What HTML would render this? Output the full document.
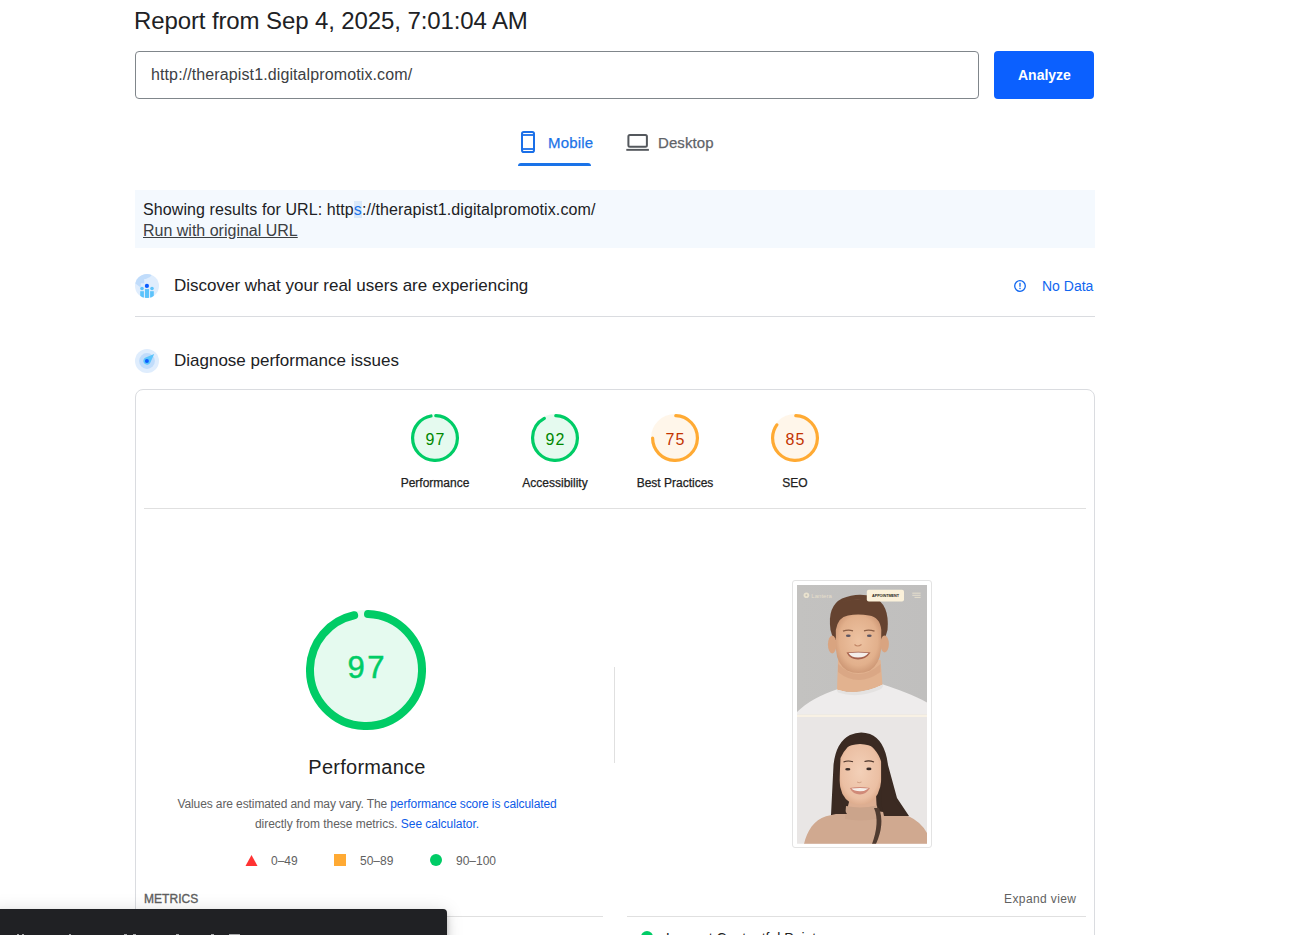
<!DOCTYPE html>
<html><head><meta charset="utf-8">
<style>
html,body{margin:0;padding:0;background:#fff;width:1306px;height:935px;overflow:hidden;position:relative;}
body{font-family:"Liberation Sans",sans-serif;color:#202124;}
.a{position:absolute;white-space:nowrap;}
.t{position:absolute;white-space:nowrap;line-height:1;}
</style></head><body>

<!-- Title -->
<div class="t" style="left:134px;top:9px;font-size:24px;letter-spacing:-0.11px;color:#202124;">Report from Sep 4, 2025, 7:01:04 AM</div>

<!-- URL input -->
<div class="a" style="left:135px;top:51px;width:842px;height:46px;border:1px solid #80868b;border-radius:4px;"></div>
<div class="t" style="left:151px;top:67px;font-size:16px;letter-spacing:0.11px;color:#3c4043;">http://therapist1.digitalpromotix.com/</div>

<!-- Analyze button -->
<div class="a" style="left:994px;top:51px;width:100px;height:48px;background:#0b60ff;border-radius:4px;"></div>
<div class="t" style="left:1018px;top:68px;font-size:14px;font-weight:bold;color:#fff;">Analyze</div>

<!-- Tabs -->
<svg class="a" style="left:518px;top:128px;" width="22" height="28" viewBox="0 0 22 28">
  <rect x="4" y="4" width="12" height="20" rx="1.8" ry="1.8" fill="none" stroke="#1a6fe8" stroke-width="2"/>
  <line x1="4" y1="7" x2="16" y2="7" stroke="#1a6fe8" stroke-width="1.8"/>
  <line x1="4" y1="21" x2="16" y2="21" stroke="#1a6fe8" stroke-width="1.8"/>
</svg>
<div class="t" style="left:548px;top:135px;font-size:15px;letter-spacing:0.2px;color:#1a73e8;-webkit-text-stroke:0.25px #1a73e8;">Mobile</div>
<div class="a" style="left:518px;top:163px;width:73px;height:3px;background:#1a73e8;border-radius:3px 3px 0 0;"></div>

<svg class="a" style="left:624px;top:130px;" width="28" height="24" viewBox="0 0 28 24">
  <rect x="4.4" y="5" width="18.5" height="11.7" rx="1.5" fill="none" stroke="#54585d" stroke-width="2"/>
  <rect x="2.3" y="18.9" width="22.6" height="1.9" fill="#54585d"/>
</svg>
<div class="t" style="left:658px;top:135px;font-size:15px;letter-spacing:0.1px;color:#5f6368;-webkit-text-stroke:0.25px #5f6368;">Desktop</div>

<!-- Info box -->
<div class="a" style="left:135px;top:190px;width:960px;height:58px;background:#f4f9fe;"></div>
<div class="t" style="left:143px;top:202px;font-size:16px;letter-spacing:0.094px;color:#202124;">Showing results for URL: http<span style="color:#1a73e8;background:#dbe9f9;">s</span>://therapist1.digitalpromotix.com/</div>
<div class="t" style="left:143px;top:223px;font-size:16px;color:#3c4043;text-decoration:underline;">Run with original URL</div>

<!-- Discover row -->
<svg class="a" style="left:135px;top:274px;" width="24" height="24" viewBox="0 0 24 24">
  <defs><clipPath id="dc"><circle cx="12" cy="12" r="12"/></clipPath></defs>
  <g clip-path="url(#dc)">
  <rect width="24" height="24" fill="#dfedfd"/>
  <path d="M-1 8.6 L4.7 12.7 L5.8 12.7 L5.8 9.2 L9.2 9.2 L9.2 5 L10.8 5 L15 3.1 L16.8 0.8 L17 -1 L-1 -1 Z" fill="#c0dcfb"/>
  <circle cx="11.9" cy="11.9" r="2.1" fill="#0b5cff"/>
  <rect x="10" y="15.1" width="4" height="10" fill="#5cc3fb"/>
  <circle cx="7" cy="14.5" r="1.8" fill="#5cc3fb"/>
  <rect x="5.2" y="17.2" width="3.7" height="8" fill="#5cc3fb"/>
  <circle cx="17" cy="14.5" r="1.8" fill="#5cc3fb"/>
  <rect x="15.1" y="17.2" width="3.7" height="8" fill="#5cc3fb"/>
  </g>
</svg>
<div class="t" style="left:174px;top:277px;font-size:17px;color:#202124;">Discover what your real users are experiencing</div>
<svg class="a" style="left:1013px;top:279px;" width="14" height="14" viewBox="0 0 14 14">
  <circle cx="7" cy="7" r="5.3" fill="none" stroke="#0f66f0" stroke-width="1.3"/>
  <rect x="6.35" y="3.8" width="1.3" height="4" fill="#0f66f0"/>
  <rect x="6.35" y="8.8" width="1.3" height="1.3" fill="#0f66f0"/>
</svg>
<div class="t" style="left:1042px;top:279px;font-size:14px;color:#0f66f0;">No Data</div>
<div class="a" style="left:135px;top:316px;width:960px;height:1px;background:#dadce0;"></div>

<!-- Diagnose row -->
<svg class="a" style="left:135px;top:349px;" width="24" height="24" viewBox="0 0 24 24">
  <circle cx="12" cy="12" r="12" fill="#dfedfd"/>
  <circle cx="12" cy="12" r="7.9" fill="#c0dcfb"/>
  <path d="M10.62 8.57 L19.2 5 L15.39 13.48 A3.7 3.7 0 1 1 10.62 8.57 Z" fill="#5cc5fb"/>
  <circle cx="11.9" cy="11.9" r="2" fill="#0b5cff"/>
</svg>
<div class="t" style="left:174px;top:352px;font-size:17px;color:#202124;">Diagnose performance issues</div>

<!-- Card -->
<div class="a" style="left:135px;top:389px;width:958px;height:600px;border:1px solid #dadce0;border-radius:8px;"></div>

<svg class="a" style="left:411px;top:414px;" width="48" height="48" viewBox="0 0 120 120">
  <circle cx="60" cy="60" r="60" fill="#0c6" fill-opacity="0.1"/>
  <circle cx="60" cy="60" r="56" fill="none" stroke="#0c6" stroke-width="8" stroke-linecap="round" stroke-dasharray="337.30 351.86" transform="rotate(-87.954 60 60)"/>
</svg>
<div class="t" style="left:395px;width:80px;text-align:center;top:432px;font-size:16px;letter-spacing:1px;text-indent:1px;color:#080;">97</div>
<div class="t" style="left:375px;width:120px;text-align:center;top:477px;font-size:12px;color:#212121;-webkit-text-stroke:0.25px #212121;">Performance</div>
<svg class="a" style="left:531px;top:414px;" width="48" height="48" viewBox="0 0 120 120">
  <circle cx="60" cy="60" r="60" fill="#0c6" fill-opacity="0.1"/>
  <circle cx="60" cy="60" r="56" fill="none" stroke="#0c6" stroke-width="8" stroke-linecap="round" stroke-dasharray="319.71 351.86" transform="rotate(-87.954 60 60)"/>
</svg>
<div class="t" style="left:515px;width:80px;text-align:center;top:432px;font-size:16px;letter-spacing:1px;text-indent:1px;color:#080;">92</div>
<div class="t" style="left:495px;width:120px;text-align:center;top:477px;font-size:12px;color:#212121;-webkit-text-stroke:0.25px #212121;">Accessibility</div>
<svg class="a" style="left:651px;top:414px;" width="48" height="48" viewBox="0 0 120 120">
  <circle cx="60" cy="60" r="60" fill="#fa3" fill-opacity="0.1"/>
  <circle cx="60" cy="60" r="56" fill="none" stroke="#fa3" stroke-width="8" stroke-linecap="round" stroke-dasharray="259.89 351.86" transform="rotate(-87.954 60 60)"/>
</svg>
<div class="t" style="left:635px;width:80px;text-align:center;top:432px;font-size:16px;letter-spacing:1px;text-indent:1px;color:#c33300;">75</div>
<div class="t" style="left:615px;width:120px;text-align:center;top:477px;font-size:12px;color:#212121;-webkit-text-stroke:0.25px #212121;">Best Practices</div>
<svg class="a" style="left:771px;top:414px;" width="48" height="48" viewBox="0 0 120 120">
  <circle cx="60" cy="60" r="60" fill="#fa3" fill-opacity="0.1"/>
  <circle cx="60" cy="60" r="56" fill="none" stroke="#fa3" stroke-width="8" stroke-linecap="round" stroke-dasharray="295.08 351.86" transform="rotate(-87.954 60 60)"/>
</svg>
<div class="t" style="left:755px;width:80px;text-align:center;top:432px;font-size:16px;letter-spacing:1px;text-indent:1px;color:#c33300;">85</div>
<div class="t" style="left:735px;width:120px;text-align:center;top:477px;font-size:12px;color:#212121;-webkit-text-stroke:0.25px #212121;">SEO</div>
<div class="a" style="left:144px;top:508px;width:942px;height:1px;background:#e0e0e0;"></div>
<svg class="a" style="left:306px;top:610px;" width="120" height="120" viewBox="0 0 120 120">
  <circle cx="60" cy="60" r="60" fill="#0c6" fill-opacity="0.1"/>
  <circle cx="60" cy="60" r="56" fill="none" stroke="#0c6" stroke-width="8" stroke-linecap="round" stroke-dasharray="337.30 351.86" transform="rotate(-87.954 60 60)"/>
</svg>
<div class="t" style="left:266px;width:200px;text-align:center;top:652px;font-size:31px;letter-spacing:2.5px;text-indent:2.5px;color:#0c6;-webkit-text-stroke:0.5px #0c6;">97</div>
<div class="t" style="left:217px;width:300px;text-align:center;top:757px;font-size:20px;letter-spacing:0.27px;color:#212121;">Performance</div>
<div class="a" style="left:167px;width:400px;text-align:center;top:794px;font-size:12px;line-height:20px;letter-spacing:-0.1px;color:#616161;">Values are estimated and may vary. The <span style="color:#0d5be8;">performance score is calculated</span></div>
<div class="a" style="left:167px;width:400px;text-align:center;top:814px;font-size:12px;line-height:20px;letter-spacing:-0.03px;color:#616161;">directly from these metrics. <span style="color:#0d5be8;">See calculator.</span></div>
<svg class="a" style="left:245px;top:854px;" width="13" height="13" viewBox="0 0 13 13"><path d="M6.5 1 L12.5 12 L0.5 12 Z" fill="#f33"/></svg>
<div class="t" style="left:271px;top:855px;font-size:12px;color:#616161;">0–49</div>
<div class="a" style="left:334px;top:854px;width:12px;height:12px;background:#fa3;"></div>
<div class="t" style="left:360px;top:855px;font-size:12px;color:#616161;">50–89</div>
<div class="a" style="left:430px;top:854px;width:12px;height:12px;background:#0c6;border-radius:50%;"></div>
<div class="t" style="left:456px;top:855px;font-size:12px;color:#616161;">90–100</div>
<div class="a" style="left:614px;top:667px;width:1px;height:96px;background:#e0e0e0;"></div>
<div class="t" style="left:144px;top:893px;font-size:12px;letter-spacing:0.05px;color:#5f5f5f;-webkit-text-stroke:0.35px #5f5f5f;">METRICS</div>
<div class="t" style="left:1004px;top:893px;font-size:12px;letter-spacing:0.4px;color:#616161;">Expand view</div>
<div class="a" style="left:144px;top:916px;width:459px;height:1px;background:#e0e0e0;"></div>
<div class="a" style="left:627px;top:916px;width:459px;height:1px;background:#e0e0e0;"></div>
<div class="a" style="left:641px;top:931px;width:12px;height:12px;background:#0c6;border-radius:50%;"></div>
<div class="t" style="left:666px;top:931px;font-size:14px;color:#212121;">Largest Contentful Paint</div>
<div class="a" style="left:-10px;top:909px;width:457px;height:60px;background:#202124;border-radius:4px;box-shadow:0 3px 5px -1px rgba(0,0,0,.2),0 6px 10px 0 rgba(0,0,0,.14),0 1px 18px 0 rgba(0,0,0,.12);"></div>
<div class="a" style="left:17.4px;top:933.5px;width:1.6px;height:1.5px;background:#a9aaac;"></div><div class="a" style="left:22px;top:933.5px;width:2.0px;height:1.5px;background:#a9aaac;"></div><div class="a" style="left:69px;top:933.5px;width:2.0px;height:1.5px;background:#a9aaac;"></div><div class="a" style="left:124.4px;top:933.5px;width:2.6px;height:1.5px;background:#a9aaac;"></div><div class="a" style="left:133px;top:933.5px;width:2.5px;height:1.5px;background:#a9aaac;"></div><div class="a" style="left:176px;top:933.5px;width:2.8px;height:1.5px;background:#a9aaac;"></div><div class="a" style="left:211px;top:933.5px;width:2.6px;height:1.5px;background:#a9aaac;"></div><div class="a" style="left:229px;top:933.5px;width:10.5px;height:1.5px;background:#a9aaac;"></div>
<div class="a" style="left:792px;top:580px;width:138px;height:266px;border:1px solid #e3e3e3;border-radius:3px;background:#fff;"></div>
<svg class="a" style="left:797px;top:585px;" width="130" height="259" viewBox="797 585 130 259">
<defs>
  <clipPath id="c1"><rect x="797" y="585" width="130" height="129.6"/></clipPath>
  <clipPath id="c2"><rect x="797" y="717" width="130" height="126.7"/></clipPath>
  <radialGradient id="skin1" cx="0.5" cy="0.45" r="0.6"><stop offset="0" stop-color="#eec3a2"/><stop offset="0.7" stop-color="#e2b08c"/><stop offset="1" stop-color="#c99270"/></radialGradient>
  <radialGradient id="skin2" cx="0.5" cy="0.45" r="0.6"><stop offset="0" stop-color="#f3d0b8"/><stop offset="0.75" stop-color="#ebbfa3"/><stop offset="1" stop-color="#d9a686"/></radialGradient>
  <linearGradient id="bg1" x1="0" y1="0" x2="1" y2="0"><stop offset="0" stop-color="#c3c2c0"/><stop offset="1" stop-color="#c0bfbe"/></linearGradient>
</defs>
<g clip-path="url(#c1)">
  <rect x="797" y="585" width="130" height="130" fill="url(#bg1)"/>
  <!-- neck -->
  <path d="M838 660 L880.5 660 L882.5 685 Q858 696 837 690 Z" fill="#e2b28f"/>
  <path d="M838 664 Q858 684 880.5 664 L880.5 672 Q858 688 838 672 Z" fill="#c58d6a" opacity="0.28"/>
  <!-- shirt -->
  <path d="M797 712 C806 703 822 694 836.5 689.5 Q858 697 883 684.5 C897 689 914 695 927 702.5 L927 716 L797 716 Z" fill="#eeecec"/>
  <path d="M836.5 689.5 Q858 697 883 684.5 Q883.5 687.5 880 689.5 Q858 699 838 692.5 Z" fill="#e4e2e1"/>
  <!-- hair back -->
  <path d="M830.5 630 Q827 606 842 598.5 Q857 592 873 596.5 Q890 604 887.5 630 L884.5 640 L833.5 640 Z" fill="#654330"/>
  <!-- ears -->
  <ellipse cx="832.2" cy="644.5" rx="4.3" ry="9" fill="#d9a480"/>
  <ellipse cx="884.6" cy="644" rx="4.3" ry="8.5" fill="#d9a480"/>
  <!-- face -->
  <path d="M835.8 630 Q838 617 848 615.5 Q858 613.5 869 615.5 Q880 617 881.3 630 L881 650 Q879.5 664 870 670.5 Q858 675.5 847 670.5 Q837 664 836 650 Z" fill="url(#skin1)"/>
  <path d="M840 603 Q857 596 876 603 Q866 599.5 857 599.5 Q848 599.5 840 603 Z" fill="#7b5640"/>
  <!-- brows -->
  <path d="M843 631.2 Q848 629.2 853 630.8" stroke="#8a5e45" stroke-width="1.3" fill="none"/>
  <path d="M864 630.8 Q869 629.2 874.5 631.2" stroke="#8a5e45" stroke-width="1.3" fill="none"/>
  <!-- eyes -->
  <ellipse cx="848.3" cy="635.8" rx="2.4" ry="1.2" fill="#5d5662"/>
  <ellipse cx="869.3" cy="635.8" rx="2.4" ry="1.2" fill="#5d5662"/>
  <!-- nose shadow -->
  <path d="M854.5 644.5 Q857.5 647.5 861.5 644.5" stroke="#c18766" stroke-width="1.1" fill="none"/>
  <!-- smile -->
  <path d="M846.5 652.5 Q858 651 870.5 652.5 Q866 659.5 858 659.5 Q850 659.5 846.5 652.5 Z" fill="#a5604c"/>
  <path d="M848.5 653 Q858 652 868.5 653 Q865 657.5 858 657.5 Q851 657.5 848.5 653 Z" fill="#f4eeea"/>
</g>
<rect x="797" y="714.6" width="130" height="2.4" fill="#f8f1e4"/>
<g clip-path="url(#c2)">
  <rect x="797" y="717" width="130" height="127" fill="#e9e6e5"/>
  <!-- back hair -->
  <path d="M831 815 L833.5 765 Q836 742 850 735 Q860 730.5 870 734 Q885 740 888 765 L897 798 L909 816 L880 818 L848 818 Z" fill="#3a2a22"/>
  <!-- neck -->
  <path d="M851 795 L876 795 L877 813 L846 813 Z" fill="#dcae92"/>
  <!-- sweater -->
  <path d="M804 844 C807 831 814 820 826 816.3 Q836 813.5 845.6 812.2 Q861 815 877.7 811.2 Q894 813 908.7 816.3 Q921 822 927 833 L927 844 Z" fill="#d0a990"/>
  <path d="M846 806 Q861 809 877 805.5 L878.5 818.5 Q861 822 845 819 Z" fill="#cba48b"/>
  <!-- face -->
  <path d="M839 758 Q841 745 860 744 Q879 745 881.3 758 L881.3 780 Q880 796 870 802.5 Q860 807 850 802.5 Q840 796 839.4 780 Z" fill="url(#skin2)"/>
  <!-- front hair -->
  <path d="M835 814 L834 772 Q835 748 848 739 Q855 735 861 738 Q846 745 840.5 758 L839 790 Q841 806 847 814 Z" fill="#3b2a22"/>
  <path d="M859 738 Q866 734 874 739 Q885 747 886 770 L893 800 L908 816 L884 816 Q881 806 881.3 795 L881.3 762 Q877 747 859 738 Z" fill="#3b2a22"/>
  <path d="M874 808 Q880 822 872 844 L876 844 Q885 824 879 808 Z" fill="#4f3b30"/>
  <!-- brows -->
  <path d="M843.5 762 Q848 760 853 761.8" stroke="#4a3228" stroke-width="1.1" fill="none"/>
  <path d="M864.5 761.5 Q869 760 874 762" stroke="#4a3228" stroke-width="1.1" fill="none"/>
  <!-- eyes -->
  <ellipse cx="847.8" cy="769.3" rx="2.6" ry="1.3" fill="#3a2c28"/>
  <ellipse cx="868.9" cy="768.9" rx="2.6" ry="1.3" fill="#3a2c28"/>
  <path d="M857 782 Q859 783.5 861.5 782" stroke="#cf9d80" stroke-width="0.9" fill="none"/>
  <!-- lips -->
  <path d="M849.8 788 Q860 786 870 788 Q866 794.5 860 794.5 Q853 794.5 849.8 788 Z" fill="#d08a78"/>
  <path d="M851.5 788.5 Q860 787.5 868.5 788.5 Q865 791.3 860 791.3 Q854 791.3 851.5 788.5 Z" fill="#f6efea"/>
</g>
</svg>
<!-- thumbnail header overlay -->
<svg class="a" style="left:797px;top:585px;" width="130" height="20" viewBox="797 585 130 20">
  <circle cx="806.4" cy="595.3" r="2.8" fill="#e9e2cf"/>
  <circle cx="806.4" cy="595.3" r="1" fill="#c6c1b6"/>
  <text x="811.3" y="598.2" font-family="Liberation Sans" font-size="6" fill="#e6dfcc" textLength="20.5">Lantera</text>
  <rect x="866.8" y="589.7" width="37.2" height="11.8" rx="2" fill="#fbf1da"/>
  <text x="872" y="597.4" font-family="Liberation Sans" font-weight="bold" font-size="3.8" fill="#2b2622" textLength="27">APPOINTMENT</text>
  <rect x="912.3" y="592.7" width="8.3" height="0.9" fill="#e9e2cf"/>
  <rect x="912.3" y="594.8" width="8.3" height="0.9" fill="#e9e2cf"/>
  <rect x="914.5" y="596.9" width="6.1" height="0.9" fill="#e9e2cf"/>
</svg>
</body></html>
